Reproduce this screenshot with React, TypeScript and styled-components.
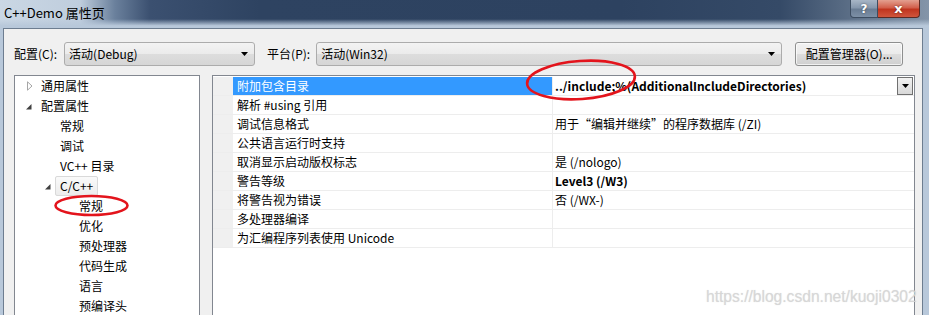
import styled, { createGlobalStyle } from 'styled-components';

const GlobalStyle = createGlobalStyle`
  html, body {
    margin: 0;
    padding: 0;
  }

  body {
    background: #ffffff;
    font-family: 'Noto Sans CJK SC', 'Noto Sans', sans-serif;
    font-size: 12px;
    color: #000000;
  }
`;

const Window = styled.div`
  position: relative;
  width: 929px;
  height: 315px;
  overflow: hidden;
  display: flex;
  flex-direction: column;
  background: #b8c8da;
`;

const TitleBar = styled.div`
  height: 28px;
  flex-shrink: 0;
  display: flex;
  align-items: flex-start;
  background:
    linear-gradient(
      to bottom,
      rgba(184, 200, 218, 0) 0%,
      rgba(184, 200, 218, 0) 68%,
      #b8c8da 92%
    ),
    linear-gradient(
      to right,
      #cad7e4 0px,
      #bfcddd 80px,
      #6a809c 115px,
      #3b5070 150px,
      #2e4361 260px,
      #2d4260 620px,
      #354a67 780px,
      #5b6e86 850px,
      #8495a9 929px
    );
`;

const TitleText = styled.span`
  padding: 5px 0 0 4px;
  font-size: 13px;
  line-height: 15px;
  color: #000000;
`;

const CaptionButtons = styled.div`
  margin-left: auto;
  margin-right: 9px;
  display: flex;
  height: 18px;
`;

const CaptionButton = styled.div<{ $close?: boolean }>`
  width: ${(p) => (p.$close ? 42 : 28)}px;
  height: 18px;
  box-sizing: border-box;
  display: flex;
  align-items: center;
  justify-content: center;
  border: 1px solid ${(p) => (p.$close ? '#5b2a24' : '#3d4d61')};
  border-top: none;
  border-left: ${(p) => (p.$close ? 'none' : undefined)};
  border-radius: ${(p) => (p.$close ? '0 0 4px 0' : '0 0 0 4px')};
  background: ${(p) =>
    p.$close
      ? 'linear-gradient(to bottom, #e3a090 0%, #d2604c 45%, #c0351f 55%, #d0553c 100%)'
      : 'linear-gradient(to bottom, #a8b6c6 0%, #8698ad 45%, #6a7d94 55%, #7d90a6 100%)'};
  color: #ffffff;
  font-family: 'DejaVu Sans', sans-serif;
  font-weight: bold;
  font-size: ${(p) => (p.$close ? 13 : 12)}px;
  text-shadow: 0 0 2px rgba(0, 0, 0, 0.6);
`;

const Frame = styled.div`
  flex: 1;
  display: flex;
  padding: 0 6px 0 3px;
  min-height: 0;
`;

const Client = styled.div`
  flex: 1;
  background: #f0f0f0;
  border: 1px solid #6d7d90;
  border-bottom: none;
  padding: 13px 7px 0 10px;
  display: flex;
  flex-direction: column;
  min-width: 0;
`;

const Toolbar = styled.div`
  display: flex;
  align-items: center;
  height: 24px;
`;

const FieldLabel = styled.span<{ $gap?: number }>`
  margin-left: ${(p) => p.$gap ?? 0}px;
  line-height: 14px;
`;

const Combo = styled.div<{ $width: number; $gap: number }>`
  width: ${(p) => p.$width}px;
  margin-left: ${(p) => p.$gap}px;
  height: 24px;
  box-sizing: border-box;
  display: flex;
  align-items: center;
  padding: 0 6px 0 4px;
  border: 1px solid #acacac;
  border-radius: 3px;
  background: linear-gradient(to bottom, #f3f3f3 0%, #ebebeb 50%, #dddddd 51%, #d6d6d6 100%);
`;

const ComboText = styled.span`
  flex: 1;
  line-height: 14px;
`;

const Arrow = () => (
  <svg width="7" height="4" viewBox="0 0 7 4">
    <path d="M0 0 H7 L3.5 4 Z" fill="#000000" />
  </svg>
);

const PushButton = styled.div`
  width: 108px;
  margin-left: 13px;
  height: 24px;
  box-sizing: border-box;
  display: flex;
  align-items: center;
  justify-content: center;
  border: 1px solid #8e8f8f;
  border-radius: 3px;
  background: linear-gradient(to bottom, #f2f2f2 0%, #ebebeb 50%, #dddddd 51%, #cfcfcf 100%);
  box-shadow: inset 0 0 0 1px rgba(255, 255, 255, 0.7);
  line-height: 14px;
`;

const Panels = styled.div`
  flex: 1;
  display: flex;
  gap: 12px;
  margin-top: 9px;
  min-height: 0;
`;

const Tree = styled.div`
  width: 186px;
  box-sizing: border-box;
  background: #ffffff;
  border: 1px solid #828790;
  border-bottom: none;
`;

const TreeRow = styled.div<{ $level: number }>`
  height: 20px;
  display: flex;
  align-items: center;
  padding-left: ${(p) => 12 + p.$level * 19}px;
`;

const Expander = styled.span`
  width: 13px;
  flex-shrink: 0;
  display: flex;
  align-items: center;
`;

const TreeText = styled.span<{ $hot?: boolean }>`
  line-height: 14px;
  padding: 2px 4px 2px 4px;
  margin-left: -4px;
  border: 1px solid ${(p) => (p.$hot ? '#d9d9d9' : 'transparent')};
  border-radius: 2px;
  background: ${(p) => (p.$hot ? 'linear-gradient(to bottom, #fafafa, #ececec)' : 'none')};
`;

const Collapsed = () => (
  <svg width="6" height="10" viewBox="0 0 6 10">
    <path d="M0.5 0.8 L5 5 L0.5 9.2 Z" fill="none" stroke="#a6a6a6" />
  </svg>
);

const Expanded = () => (
  <svg width="6" height="6" viewBox="0 0 6 6" style={{ marginLeft: -1, marginTop: 2 }}>
    <path d="M5.5 0 V5.5 H0 Z" fill="#404040" />
  </svg>
);

const Grid = styled.div`
  flex: 1;
  box-sizing: border-box;
  background: #ffffff;
  border: 1px solid #828790;
  border-bottom: none;
  padding-top: 1px;
`;

const GridRow = styled.div`
  display: grid;
  grid-template-columns: 20px 319px 1fr;
  height: 19px;
  box-sizing: border-box;
  border-bottom: 1px solid #ededed;
`;

const Gutter = styled.div`
  background: #f0f0f0;
`;

const NameCell = styled.div<{ $selected?: boolean }>`
  display: flex;
  align-items: center;
  padding-left: 4px;
  line-height: 14px;
  background: ${(p) => (p.$selected ? '#3399ff' : 'transparent')};
  color: ${(p) => (p.$selected ? '#ffffff' : '#000000')};
`;

const ValueCell = styled.div<{ $bold?: boolean }>`
  display: flex;
  align-items: center;
  padding-left: 2px;
  border-left: 1px solid #ededed;
  line-height: 14px;
  font-weight: ${(p) => (p.$bold ? 700 : 400)};
`;

const ValueText = styled.span`
  flex: 1;
`;

const DropButton = styled.div`
  width: 16px;
  height: 18px;
  margin: -1px 1px 0 0;
  box-sizing: border-box;
  display: flex;
  align-items: center;
  justify-content: center;
  border: 1px solid #707070;
  background: linear-gradient(to bottom, #f2f2f2, #d8d8d8);
`;

const Annotations = styled.svg`
  position: absolute;
  left: 0;
  top: 0;
  pointer-events: none;
`;

const Watermark = styled.span`
  position: absolute;
  left: 706px;
  top: 288px;
  font-family: 'Liberation Sans', Arial, sans-serif;
  font-size: 15.6px;
  line-height: 18px;
  color: rgba(214, 214, 214, 0.9);
  text-shadow: 0 0 1px rgba(160, 160, 160, 0.35);
`;

type TreeItem = {
  label: string;
  level: number;
  state?: 'collapsed' | 'expanded';
  hot?: boolean;
};

const treeItems: TreeItem[] = [
  { label: '通用属性', level: 0, state: 'collapsed' },
  { label: '配置属性', level: 0, state: 'expanded' },
  { label: '常规', level: 1 },
  { label: '调试', level: 1 },
  { label: 'VC++ 目录', level: 1 },
  { label: 'C/C++', level: 1, state: 'expanded', hot: true },
  { label: '常规', level: 2 },
  { label: '优化', level: 2 },
  { label: '预处理器', level: 2 },
  { label: '代码生成', level: 2 },
  { label: '语言', level: 2 },
  { label: '预编译头', level: 2 },
];

type Property = {
  name: string;
  value: string;
  bold?: boolean;
};

const properties: Property[] = [
  { name: '附加包含目录', value: '../include;%(AdditionalIncludeDirectories)', bold: true },
  { name: '解析 #using 引用', value: '' },
  { name: '调试信息格式', value: '用于“编辑并继续”的程序数据库 (/ZI)' },
  { name: '公共语言运行时支持', value: '' },
  { name: '取消显示启动版权标志', value: '是 (/nologo)' },
  { name: '警告等级', value: 'Level3 (/W3)', bold: true },
  { name: '将警告视为错误', value: '否 (/WX-)' },
  { name: '多处理器编译', value: '' },
  { name: '为汇编程序列表使用 Unicode', value: '' },
];

const App = () => {
  return (
    <>
      <GlobalStyle />
      <Window>
        <TitleBar>
          <TitleText>C++Demo 属性页</TitleText>
          <CaptionButtons>
            <CaptionButton>?</CaptionButton>
            <CaptionButton $close>x</CaptionButton>
          </CaptionButtons>
        </TitleBar>
        <Frame>
          <Client>
            <Toolbar>
              <FieldLabel>配置(C):</FieldLabel>
              <Combo $width={191} $gap={7}>
                <ComboText>活动(Debug)</ComboText>
                <Arrow />
              </Combo>
              <FieldLabel $gap={12}>平台(P):</FieldLabel>
              <Combo $width={466} $gap={6}>
                <ComboText>活动(Win32)</ComboText>
                <Arrow />
              </Combo>
              <PushButton>配置管理器(O)...</PushButton>
            </Toolbar>
            <Panels>
              <Tree>
                {treeItems.map((item, index) => (
                  <TreeRow key={index} $level={item.level}>
                    <Expander>
                      {item.state === 'collapsed' && <Collapsed />}
                      {item.state === 'expanded' && <Expanded />}
                    </Expander>
                    <TreeText $hot={item.hot}>{item.label}</TreeText>
                  </TreeRow>
                ))}
              </Tree>
              <Grid>
                {properties.map((prop, index) => (
                  <GridRow key={prop.name}>
                    <Gutter />
                    <NameCell $selected={index === 0}>{prop.name}</NameCell>
                    <ValueCell $bold={prop.bold}>
                      <ValueText>{prop.value}</ValueText>
                      {index === 0 && (
                        <DropButton>
                          <Arrow />
                        </DropButton>
                      )}
                    </ValueCell>
                  </GridRow>
                ))}
              </Grid>
            </Panels>
          </Client>
        </Frame>
        <Annotations width="929" height="315" viewBox="0 0 929 315">
          <ellipse
            cx="581"
            cy="80"
            rx="54"
            ry="19"
            transform="rotate(-4 581 80)"
            fill="none"
            stroke="#e3141c"
            strokeWidth="2.6"
          />
          <ellipse
            cx="91.5"
            cy="205.5"
            rx="36"
            ry="9.5"
            fill="none"
            stroke="#e3141c"
            strokeWidth="2.6"
          />
        </Annotations>
        <Watermark>https://blog.csdn.net/kuoji0302</Watermark>
      </Window>
    </>
  );
};

export default App;
